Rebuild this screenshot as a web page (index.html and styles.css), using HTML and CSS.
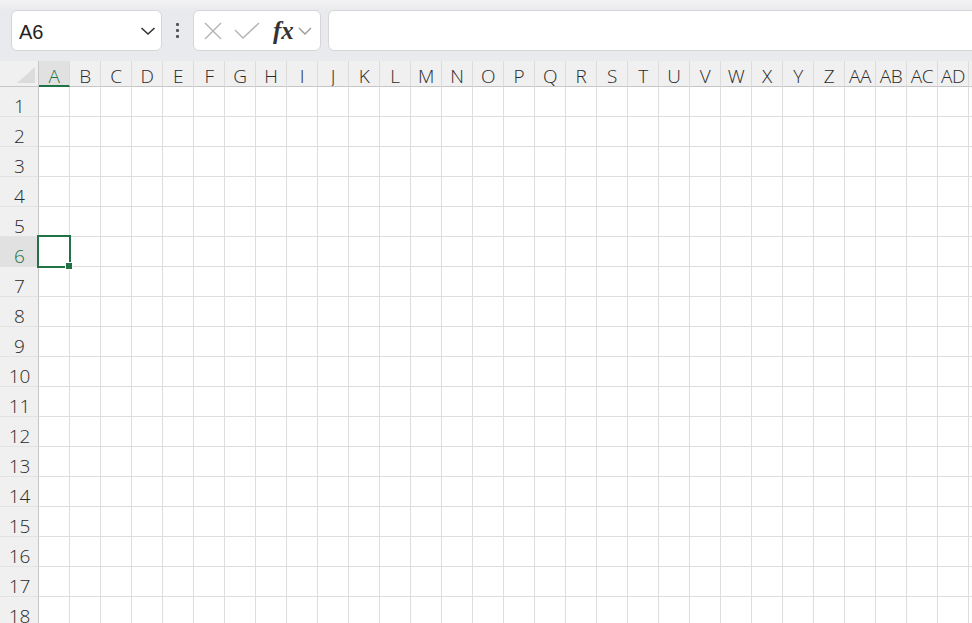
FILE: index.html
```html
<!DOCTYPE html>
<html>
<head>
<meta charset="utf-8">
<link rel="stylesheet" href="styles.css">
</head>
<body>
<div class="toolbar">
  <div class="namebox">
    <span class="ref">A6</span>
    <svg class="chev" width="16" height="10" viewBox="0 0 16 10"><path d="M1.5 2 L8 8 L14.5 2" fill="none" stroke="#333" stroke-width="1.6"/></svg>
  </div>
  <div class="dots"><i></i><i></i><i></i></div>
  <div class="fbtns">
    <svg width="20" height="20" viewBox="0 0 20 20"><path d="M2 2 L18 18 M18 2 L2 18" stroke="#b3b3b3" stroke-width="1.4" fill="none"/></svg>
    <svg width="26" height="20" viewBox="0 0 26 20"><path d="M1 9 L9 17 L25 2" stroke="#b3b3b3" stroke-width="1.4" fill="none"/></svg>
    <span class="fx">fx</span>
    <svg width="14" height="10" viewBox="0 0 14 10"><path d="M1 2 L7 8 L13 2" fill="none" stroke="#9a9a9a" stroke-width="1.4"/></svg>
  </div>
  <div class="finput"></div>
</div>
<div class="sheet">
  <div class="grid" id="grid">
    <div class="corner"><span class="tri"></span></div>
    <div class="ch sel">A</div><div class="ch">B</div><div class="ch">C</div><div class="ch">D</div><div class="ch">E</div><div class="ch">F</div><div class="ch">G</div><div class="ch">H</div><div class="ch">I</div><div class="ch">J</div><div class="ch">K</div><div class="ch">L</div><div class="ch">M</div><div class="ch">N</div><div class="ch">O</div><div class="ch">P</div><div class="ch">Q</div><div class="ch">R</div><div class="ch">S</div><div class="ch">T</div><div class="ch">U</div><div class="ch">V</div><div class="ch">W</div><div class="ch">X</div><div class="ch">Y</div><div class="ch">Z</div><div class="ch">AA</div><div class="ch">AB</div><div class="ch">AC</div><div class="ch">AD</div><div class="ch"></div>
  </div>
  <div class="selbox"><span class="handle"></span></div>
</div>
<script>
(function(){
  var g = document.getElementById('grid');
  var html = '';
  for (var r = 1; r <= 18; r++) {
    html += '<div class="rh' + (r === 6 ? ' sel' : '') + '">' + r + '</div>';
    for (var c = 0; c < 31; c++) html += '<div class="cell"></div>';
  }
  g.insertAdjacentHTML('beforeend', html);
})();
</script>
</body>
</html>
```
FILE: styles.css
```css
html, body {
  margin: 0;
  padding: 0;
  width: 972px;
  height: 623px;
  overflow: hidden;
  background: #fff;
  font-family: "Liberation Sans", Arial, sans-serif;
}
.toolbar {
  height: 61px;
  box-sizing: border-box;
  background: linear-gradient(#f3f3f5 0, #e9eaed 10px, #e9eaed 100%);
  display: flex;
  align-items: center;
  padding: 0 0 0 11px;
}
.namebox {
  width: 151px;
  height: 41px;
  box-sizing: border-box;
  background: #fff;
  border: 1px solid #d6d6d6;
  border-radius: 6px;
  display: flex;
  align-items: center;
  justify-content: space-between;
  padding: 0 5px 0 7px;
}
.ref {
  font-size: 20px;
  color: #222;
  padding-top: 3px;
}
.chev { margin-top: 1px; }
.dots {
  width: 31px;
  display: flex;
  flex-direction: column;
  align-items: center;
  gap: 3px;
}
.dots i {
  display: block;
  width: 3px;
  height: 3px;
  background: #555;
  border-radius: 1px;
}
.fbtns {
  width: 128px;
  height: 41px;
  box-sizing: border-box;
  background: #fff;
  border: 1px solid #d6d6d6;
  border-radius: 6px;
  display: flex;
  align-items: center;
  padding: 0 0 0 9px;
  gap: 8px;
}
.fbtns svg:nth-child(2) { margin-left: 3px; }
.fx {
  font-family: "Liberation Serif", "Times New Roman", serif;
  font-style: italic;
  font-weight: bold;
  font-size: 25px;
  color: #333;
  margin-left: 5px;
  margin-right: -4px;
}
.finput {
  flex: 1;
  height: 41px;
  margin-left: 7px;
  margin-right: -10px;
  box-sizing: border-box;
  background: #fff;
  border: 1px solid #d6d6d6;
  border-radius: 6px;
}
.sheet {
  position: relative;
}
.grid {
  display: grid;
  grid-template-columns: 39px repeat(31, 31px);
  grid-template-rows: 26px repeat(18, 30px);
}
.grid > div {
  box-sizing: border-box;
}
.corner {
  background: #f0f0f0;
  border-right: 1px solid #c6c6c6;
  border-bottom: 1px solid #c6c6c6;
  position: relative;
}
.tri {
  position: absolute;
  right: 3px;
  bottom: 3px;
  width: 0;
  height: 0;
  border-left: 18px solid transparent;
  border-bottom: 16px solid #dcdcdc;
}
.ch {
  background: #f0f0f0;
  border-right: 1px solid #dcdcdc;
  border-bottom: 1px solid #c6c6c6;
  display: flex;
  align-items: center;
  justify-content: center;
  font-family: "Open Sans", "Liberation Sans", sans-serif;
  font-weight: 300;
  font-size: 19px;
  color: #2a2a2a;
  white-space: nowrap;
  overflow: hidden;
  letter-spacing: -0.3px;
  padding-top: 4px;
}
.ch.sel {
  background: #e1e1e1;
  color: #217346;
  border-bottom: 2px solid #217346;
  padding-top: 5px;
}
.rh {
  background: #f0f0f0;
  border-right: 1px solid #c6c6c6;
  border-bottom: 1px solid #e3e3e3;
  display: flex;
  align-items: center;
  justify-content: center;
  padding-top: 9px;
  padding-left: 1px;
  font-family: "Open Sans", "Liberation Sans", sans-serif;
  font-weight: 300;
  font-size: 19px;
  color: #2a2a2a;
}
.rh.sel {
  background: #e1e1e1;
  color: #217346;
}
.cell {
  border-right: 1px solid #dedede;
  border-bottom: 1px solid #dedede;
}
.selbox {
  position: absolute;
  left: 37px;
  top: 174px;
  width: 34px;
  height: 33px;
  box-sizing: border-box;
  border: 2px solid #217346;
}
.handle {
  position: absolute;
  right: -4px;
  bottom: -4px;
  width: 6px;
  height: 6px;
  background: #217346;
  border: 1px solid #fff;
}
```
